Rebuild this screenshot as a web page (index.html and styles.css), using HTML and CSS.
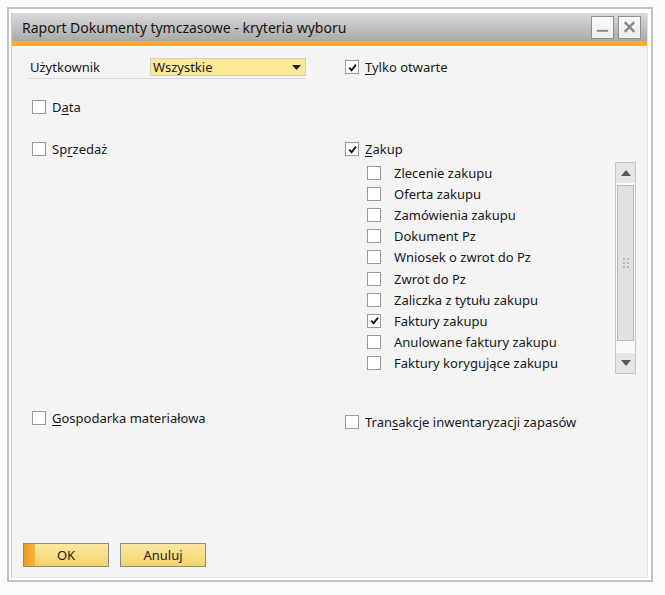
FILE: index.html
```html
<!DOCTYPE html>
<html lang="pl">
<head>
<meta charset="utf-8">
<title>Raport Dokumenty tymczasowe - kryteria wyboru</title>
<link rel="stylesheet" href="styles.css">
</head>
<body>
<div class="frame">
  <div class="window">
    <div class="titlebar">
      <span class="title">Raport Dokumenty tymczasowe - kryteria wyboru</span>
      <div class="tb-buttons">
        <span class="tb-btn"><svg width="22" height="22" viewBox="0 0 22 22"><rect x="5" y="14" width="12" height="2" fill="#8a8a8a"/></svg></span>
        <span class="tb-btn"><svg width="22" height="22" viewBox="0 0 22 22"><path d="M6 6 L16 16 M16 6 L6 16" stroke="#8a8a8a" stroke-width="2.6" fill="none"/></svg></span>
      </div>
    </div>
    <div class="stripe"></div>
    <div class="content">
      <div class="row row-user">
        <div class="user-field">
          <span class="user-label">Użytkownik</span>
          <div class="select"><span>Wszystkie</span><svg width="9" height="5" viewBox="0 0 9 5"><path d="M0 0 H9 L4.5 5 Z" fill="#222"/></svg></div>
        </div>
        <label class="check top2"><span class="box"><svg viewBox="0 0 12 12"><path d="M2.5 6.2 L5 9 L9.8 2.8" stroke="#111" stroke-width="2" fill="none"/></svg></span><span><u>T</u>ylko otwarte</span></label>
      </div>

      <div class="row row-data">
        <label class="check left"><span class="box"></span><span>D<u>a</u>ta</span></label>
      </div>

      <div class="row row-sales">
        <label class="check left"><span class="box"></span><span>Sp<u>r</u>zedaż</span></label>
        <div class="purchase">
          <label class="check"><span class="box"><svg viewBox="0 0 12 12"><path d="M2.5 6.2 L5 9 L9.8 2.8" stroke="#111" stroke-width="2" fill="none"/></svg></span><span><u>Z</u>akup</span></label>
          <div class="list">
            <div class="items">
              <label class="item"><span class="box"></span><span>Zlecenie zakupu</span></label>
              <label class="item"><span class="box"></span><span>Oferta zakupu</span></label>
              <label class="item"><span class="box"></span><span>Zamówienia zakupu</span></label>
              <label class="item"><span class="box"></span><span>Dokument Pz</span></label>
              <label class="item"><span class="box"></span><span>Wniosek o zwrot do Pz</span></label>
              <label class="item"><span class="box"></span><span>Zwrot do Pz</span></label>
              <label class="item"><span class="box"></span><span>Zaliczka z tytułu zakupu</span></label>
              <label class="item"><span class="box"><svg viewBox="0 0 12 12"><path d="M2.5 6.2 L5 9 L9.8 2.8" stroke="#111" stroke-width="2" fill="none"/></svg></span><span>Faktury zakupu</span></label>
              <label class="item"><span class="box"></span><span>Anulowane faktury zakupu</span></label>
              <label class="item"><span class="box"></span><span>Faktury korygujące zakupu</span></label>
            </div>
            <div class="scrollbar">
              <div class="sb-arrow"><svg width="10" height="6" viewBox="0 0 10 6"><path d="M0 6 H10 L5 0 Z" fill="#555"/></svg></div>
              <div class="sb-thumb"><svg width="6" height="10" viewBox="0 0 6 10"><g fill="#b8b8b8"><rect x="0" y="0" width="2" height="2"/><rect x="4" y="0" width="2" height="2"/><rect x="0" y="4" width="2" height="2"/><rect x="4" y="4" width="2" height="2"/><rect x="0" y="8" width="2" height="2"/><rect x="4" y="8" width="2" height="2"/></g></svg></div>
              <div class="sb-track"></div>
              <div class="sb-arrow"><svg width="10" height="6" viewBox="0 0 10 6"><path d="M0 0 H10 L5 6 Z" fill="#555"/></svg></div>
            </div>
          </div>
        </div>
      </div>

      <div class="row row-misc">
        <label class="check left"><span class="box"></span><span><u>G</u>ospodarka materiałowa</span></label>
        <label class="check down4"><span class="box"></span><span>Tran<u>s</u>akcje inwentaryzacji zapasów</span></label>
      </div>

      <div class="buttons">
        <button class="btn btn-ok">OK</button>
        <button class="btn">Anuluj</button>
      </div>
    </div>
  </div>
</div>
</body>
</html>
```

FILE: styles.css
```css
* { box-sizing: border-box; }
html, body { margin: 0; padding: 0; }
body {
  background: #fbfbfb;
  font-family: "Noto Sans", "Open Sans", sans-serif;
  font-size: 13px;
  color: #171717;
  width: 665px;
  height: 595px;
  padding: 7px 0 0 7px;
}
.frame {
  width: 646px;
  height: 575px;
  border: 2px solid #c2c2c2;
  background: #fdfdfd;
  padding: 4px 3px 2px 2px;
}
.window {
  height: 100%;
  display: flex;
  flex-direction: column;
  border-left: 1px solid #c8c8c8;
  border-right: 1px solid #e4e4e4;
  border-bottom: 1px solid #e8e8e8;
}
.titlebar {
  height: 28px;
  background: linear-gradient(#dadada, #a9a9a9);
  display: flex;
  align-items: center;
  justify-content: space-between;
  padding: 0 6px 0 10px;
}
.title {
  font-size: 14px;
  color: #141414;
}
.tb-buttons { display: flex; gap: 4px; }
.tb-btn {
  width: 23px;
  height: 23px;
  background: linear-gradient(#fafafa, #ececec);
  border: 1px solid #8e8e8e;
  display: flex;
  align-items: center;
  justify-content: center;
}
.stripe { height: 5px; background: #f7b11c; }
.content {
  flex: 1;
  background: #f4f4f4;
  padding: 12px 0 0 16px;
  display: flex;
  flex-direction: column;
}
.row {
  display: grid;
  grid-template-columns: 316px 1fr;
  align-items: start;
}
.row-user { height: 22px; }
.user-field {
  width: 278px;
  height: 21px;
  border-bottom: 1px solid #d9d9d9;
  display: flex;
  align-items: flex-start;
  padding-left: 2px;
}
.user-label { width: 120px; line-height: 18px; }
.select {
  width: 156px;
  height: 18px;
  background: #fbe996;
  border: 1px solid #d2d0c0;
  display: flex;
  align-items: center;
  justify-content: space-between;
  padding: 0 4px 0 2px;
  line-height: 16px;
}
.check { display: flex; align-items: center; gap: 6px; line-height: 16px; }
.check .box { margin-left: 1px; }
.check.left .box { margin-left: 4px; }
.top2 { margin-top: 1px; }
.down4 { margin-top: 4px; }
.box {
  width: 14px;
  height: 14px;
  border: 1px solid #9a9a9a;
  background: #fff;
  display: inline-flex;
  align-items: center;
  justify-content: center;
  flex: none;
}
.box svg { width: 11px; height: 11px; }
.row-data { margin-top: 19px; }
.row-sales { margin-top: 26px; }
.purchase { display: flex; flex-direction: column; }
.list {
  display: flex;
  margin-top: 5px;
  padding-left: 23px;
  width: 292px;
}
.items { flex: 1; display: flex; flex-direction: column; }
.item {
  height: 21.2px;
  display: flex;
  align-items: center;
  gap: 13px;
}
.scrollbar {
  width: 21px;
  height: 212px;
  border: 1px solid #c6c6c6;
  display: flex;
  flex-direction: column;
  background: #f9f9f9;
}
.sb-arrow {
  height: 20px;
  display: flex;
  align-items: center;
  justify-content: center;
  background: #e6e6e6;
}
.sb-thumb {
  margin: 2px 1px 0;
  height: 156px;
  background: #e2e2e2;
  border: 1px solid #b9b9b9;
  display: flex;
  align-items: center;
  justify-content: center;
}
.sb-track { flex: 1; }
.row-misc { margin-top: 36px; }
.buttons {
  margin-top: auto;
  margin-bottom: 10px;
  margin-left: -5px;
  display: flex;
  gap: 11px;
}
.btn {
  width: 86px;
  height: 24px;
  font-family: inherit;
  font-size: 13px;
  color: #222;
  border: 1px solid #8a8a8a;
  background: linear-gradient(#fbe8a4, #f3d46a);
  padding: 0;
}
.btn-ok {
  background: linear-gradient(90deg, #f09a1a 0, #f5b43a 11px, transparent 11px), linear-gradient(#fbe8a4, #f3d46a);
}
u { text-decoration-thickness: 1px; text-underline-offset: 2px; }
```
